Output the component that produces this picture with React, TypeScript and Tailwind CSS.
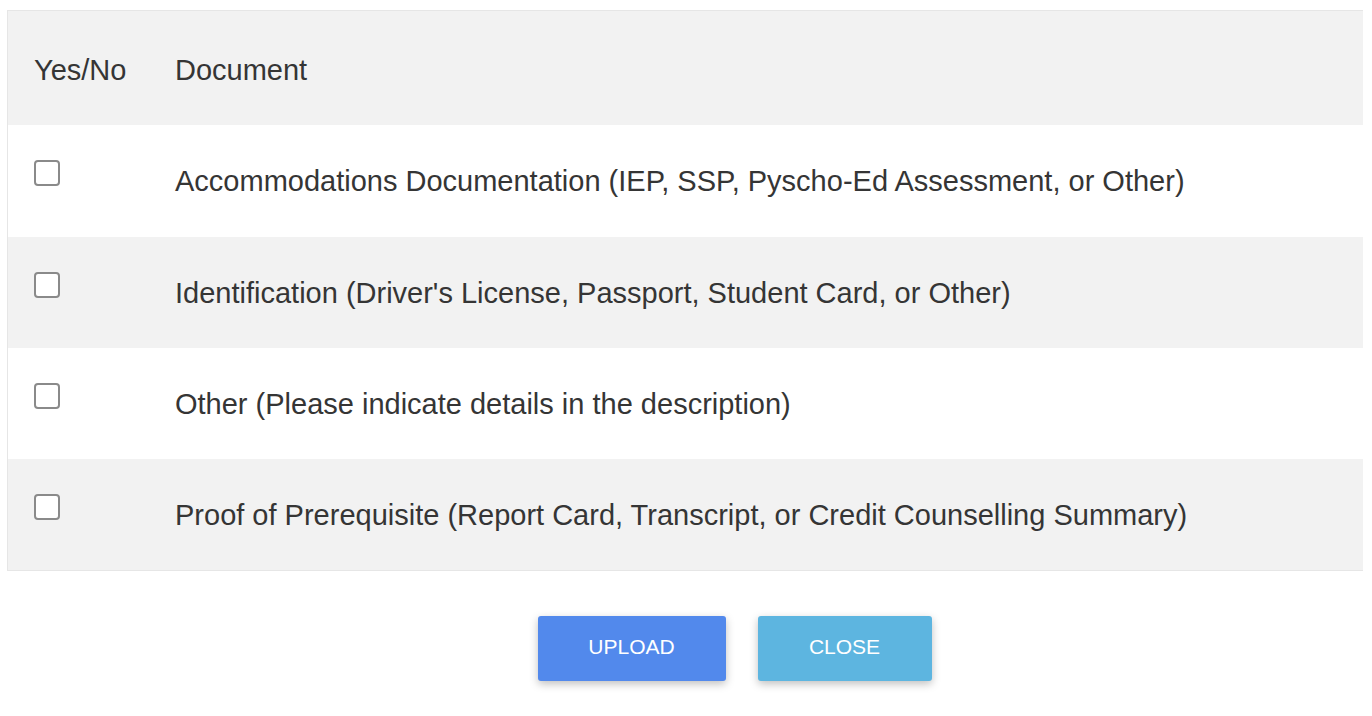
import React from "react";

const rows = [
  { t: "Accommodations Documentation (IEP, SSP, Pyscho-Ed Assessment, or Other)", h: "h-[112px]" },
  { t: "Identification (Driver's License, Passport, Student Card, or Other)", h: "h-[111px]" },
  { t: "Other (Please indicate details in the description)", h: "h-[111px]" },
  { t: "Proof of Prerequisite (Report Card, Transcript, or Credit Counselling Summary)", h: "h-[111px]" },
];

export default function App() {
  return (
    <div
      className="w-[1372px] h-[716px] bg-white text-[#353535] overflow-hidden"
      style={{ fontFamily: '"Liberation Sans", Arial, sans-serif' }}
    >
      <div className="pt-[10px] pl-[7px] pr-[9px]">
        <div className="border border-[#e6e6e6] border-r-0">
          <div className="flex h-[114px] items-center bg-[#f2f2f2] text-[29px] pt-[5px]">
            <div className="w-[167px] pl-[26px]">Yes/No</div>
            <div>Document</div>
          </div>
          {rows.map((r, i) => (
            <div
              key={i}
              className={`flex ${r.h} items-center text-[29px] ${
                i % 2 === 1 ? "bg-[#f2f2f2]" : "bg-white"
              }`}
            >
              <div className="w-[167px] pl-[26px] self-start pt-[35px]">
                <div className="w-[26px] h-[26px] rounded-[4px] border-2 border-[#8a8a8a] bg-white" />
              </div>
              <div className="pt-[2px]">{r.t}</div>
            </div>
          ))}
        </div>
      </div>
      <div className="flex justify-center gap-[32px] pt-[45px] pl-[97px]">
        <button className="w-[188px] h-[65px] rounded-[3px] bg-[#5289ec] text-white text-[21px] pb-[3px] shadow-[0_3px_8px_rgba(0,0,0,0.25)]">
          UPLOAD
        </button>
        <button className="w-[174px] h-[65px] rounded-[3px] bg-[#5db5e0] text-white text-[21px] pb-[3px] shadow-[0_3px_8px_rgba(0,0,0,0.25)]">
          CLOSE
        </button>
      </div>
    </div>
  );
}
